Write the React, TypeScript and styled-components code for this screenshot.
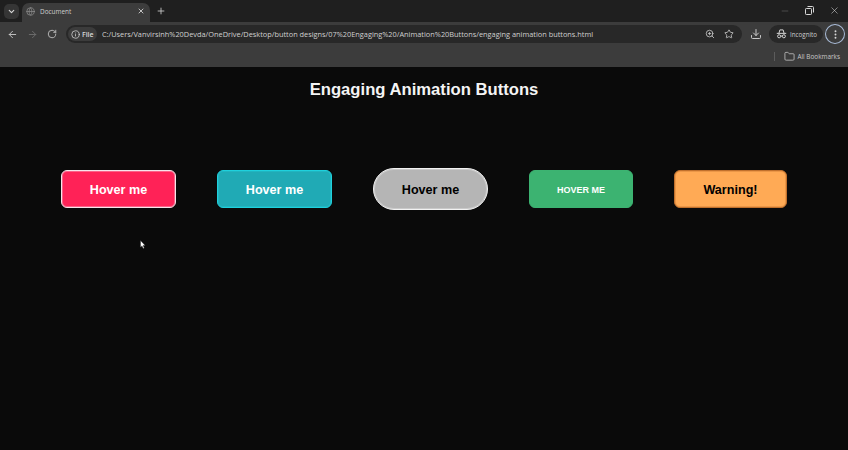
import type { FC, ReactNode } from 'react'
import styled, { createGlobalStyle } from 'styled-components'
import { ArrowLeft, ArrowRight, ChevronDown, Download, Globe, Info, Minus, Plus, RotateCw, Star, X, ZoomIn, Folder, MoreVertical } from 'lucide-react'

const Global = createGlobalStyle`
	html, body {
		margin: 0;
		padding: 0;
		height: 100%;
		background: #0a0a0a;
		overflow: hidden;
	}
	#root {
		height: 100%;
	}
`

const Spy: FC = () => (
	<svg width="11" height="10" viewBox="0 0 12 11" fill="none" stroke="#d4d4d4" strokeWidth="1.1">
		<path d="M3.2 4.6 L4.2 1 H7.8 L8.8 4.6" />
		<path d="M0.8 4.8 H11.2" />
		<circle cx="3.4" cy="8" r="1.7" />
		<circle cx="8.6" cy="8" r="1.7" />
		<path d="M5.1 7.8 H6.9" />
	</svg>
)

const Restore: FC = () => (
	<svg width="9" height="9" viewBox="0 0 9 9" fill="none" stroke="#d8d8d8" strokeWidth="1">
		<rect x="0.5" y="2.5" width="6" height="6" rx="0.8" />
		<path d="M2.5 0.5 H7.5 Q8.5 0.5 8.5 1.5 V6.5" />
	</svg>
)

const Cursor: FC = () => (
	<svg width="6" height="9" viewBox="0 0 6 9">
		<path d="M0.5 0.5 V7.2 L2 5.9 L3.2 8.4 L4.3 7.9 L3.1 5.5 H5.2 Z" fill="#fff" stroke="#222" strokeWidth="0.4" />
	</svg>
)

const ToolIcon: FC<{ children: ReactNode; dim?: boolean }> = ({ children, dim }) => <IconSlot $dim={dim}>{children}</IconSlot>

const App: FC = () => {
	return (
		<Window>
			<Global />
			<TabStrip>
				<TabSearch>
					<ChevronDown size={9} strokeWidth={3} />
				</TabSearch>
				<Tab>
					<Globe size={9} color="#8c8c8c" strokeWidth={2} />
					<TabTitle>Document</TabTitle>
					<X size={8} color="#dcdcdc" strokeWidth={2.5} />
				</Tab>
				<NewTab>
					<Plus size={10} strokeWidth={2} />
				</NewTab>
				<WindowControls>
					<Minus size={10} color="#777" strokeWidth={1.2} />
					<Restore />
					<X size={11} color="#d8d8d8" strokeWidth={1.2} />
				</WindowControls>
			</TabStrip>
			<Toolbar>
				<NavGroup>
					<ToolIcon>
						<ArrowLeft size={11} />
					</ToolIcon>
					<ToolIcon dim>
						<ArrowRight size={11} />
					</ToolIcon>
					<ToolIcon>
						<RotateCw size={10} />
					</ToolIcon>
				</NavGroup>
				<Omnibox>
					<FileChip>
						<Info size={9} strokeWidth={2} />
						File
					</FileChip>
					<Url>C:/Users/Vanvirsinh%20Devda/OneDrive/Desktop/button designs/07%20Engaging%20/Animation%20Buttons/engaging animation buttons.html</Url>
					<OmniActions>
						<ZoomIn size={10} />
						<Star size={10} strokeWidth={2} />
					</OmniActions>
				</Omnibox>
				<DownloadSlot>
					<Download size={12} />
				</DownloadSlot>
				<IncognitoPill>
					<Spy />
					Incognito
				</IncognitoPill>
				<MenuRing>
					<MoreVertical size={11} strokeWidth={2.2} />
				</MenuRing>
			</Toolbar>
			<BookmarksBar>
				<Separator />
				<Folder size={11} color="#d0d0d0" strokeWidth={1.6} />
				<BookmarksLabel>All Bookmarks</BookmarksLabel>
			</BookmarksBar>
			<Page>
				<Title>Engaging Animation Buttons</Title>
				<ButtonRow>
					<DemoButton $w={115} $bg="#ff2257" $border="#f6e4ea" $color="#fff" $radius={6}>
						Hover me
					</DemoButton>
					<DemoButton $w={115} $bg="#20aab5" $border="#1fd0dc" $color="#fff" $radius={6}>
						Hover me
					</DemoButton>
					<DemoButton $w={115} $h={42} $bg="#b5b5b5" $border="#f2f2f2" $color="#000" $radius={21}>
						Hover me
					</DemoButton>
					<DemoButton $w={104} $bg="#3cb371" $border="#3cb371" $color="#fff" $radius={6} $size={9}>
						HOVER ME
					</DemoButton>
					<DemoButton $w={113} $bg="#ffaa55" $border="#c0702c" $color="#000" $radius={6}>
						Warning!
					</DemoButton>
				</ButtonRow>
				<Pointer>
					<Cursor />
				</Pointer>
			</Page>
		</Window>
	)
}

const Window = styled.div`
	width: 848px;
	height: 450px;
	display: flex;
	flex-direction: column;
	font-family: 'Liberation Sans', Arial, sans-serif;
	background: #0a0a0a;
	overflow: hidden;
`

const TabStrip = styled.div`
	height: 22px;
	flex: none;
	background: #1f1f1f;
	display: flex;
	align-items: flex-end;
	padding-left: 4px;
	color: #d8d8d8;
`

const TabSearch = styled.div`
	width: 15px;
	height: 15px;
	margin-bottom: 3px;
	border-radius: 5px;
	background: #353535;
	display: flex;
	align-items: center;
	justify-content: center;
`

const Tab = styled.div`
	width: 128px;
	height: 19px;
	margin-left: 3px;
	box-sizing: border-box;
	padding: 0 5px 3px 4px;
	background: #3c3c3c;
	border-radius: 7px 7px 0 0;
	display: flex;
	align-items: center;
	gap: 5px;
`

const TabTitle = styled.span`
	flex: 1;
	font-size: 6.4px;
	color: #cfcfcf;
	font-family: 'Open Sans', sans-serif;
`

const NewTab = styled.div`
	margin: 0 0 6px 6px;
	display: flex;
	color: #d0d0d0;
`

const WindowControls = styled.div`
	margin: 0 8px 6px auto;
	display: flex;
	align-items: center;
	gap: 15px;
`

const Toolbar = styled.div`
	height: 23px;
	flex: none;
	box-sizing: border-box;
	background: #3c3c3c;
	display: flex;
	align-items: center;
	padding: 1px 3px 0 6px;
	color: #c8c8c8;
`

const NavGroup = styled.div`
	display: flex;
	align-items: center;
	gap: 8px;
	width: 60px;
`

const IconSlot = styled.span<{ $dim?: boolean }>`
	width: 12px;
	display: flex;
	justify-content: center;
	color: ${p => (p.$dim ? '#6f6f6f' : '#c8c8c8')};
`

const Omnibox = styled.div`
	width: 677px;
	height: 18px;
	box-sizing: border-box;
	border-radius: 9px;
	background: #282828;
	display: flex;
	align-items: center;
	padding: 0 8px 0 2px;
`

const FileChip = styled.div`
	width: 29px;
	height: 14px;
	box-sizing: border-box;
	padding-left: 3px;
	border-radius: 7px;
	background: #3c3c3c;
	display: flex;
	align-items: center;
	gap: 2px;
	color: #d8d8d8;
	font-family: 'Open Sans', sans-serif;
	font-size: 7px;
	font-weight: 600;
`

const Url = styled.div`
	margin-left: 5px;
	flex: 1;
	font-family: 'Open Sans', sans-serif;
	font-size: 7.37px;
	color: #d0d0d0;
	white-space: nowrap;
	overflow: hidden;
`

const OmniActions = styled.div`
	display: flex;
	align-items: center;
	gap: 9px;
	color: #c8c8c8;
`

const DownloadSlot = styled.div`
	width: 26px;
	margin-left: 1px;
	display: flex;
	justify-content: center;
	color: #c8c8c8;
`

const IncognitoPill = styled.div`
	width: 54px;
	height: 18px;
	box-sizing: border-box;
	padding-left: 7px;
	border-radius: 9px;
	background: #282828;
	display: flex;
	align-items: center;
	gap: 3px;
	font-family: 'Open Sans', sans-serif;
	font-size: 6.2px;
	color: #cfcfcf;
`

const MenuRing = styled.div`
	width: 20px;
	height: 20px;
	margin-left: 2px;
	box-sizing: border-box;
	border: 1.2px solid #a9bcd8;
	border-radius: 50%;
	display: flex;
	align-items: center;
	justify-content: center;
	color: #d8d8d8;
`

const BookmarksBar = styled.div`
	height: 22px;
	flex: none;
	background: #3c3c3c;
	display: flex;
	align-items: center;
	justify-content: flex-end;
	padding-right: 8px;
	box-sizing: border-box;
`

const Separator = styled.div`
	width: 1px;
	height: 9px;
	margin-right: 9px;
	background: #5c5c5c;
`

const BookmarksLabel = styled.span`
	margin-left: 2px;
	font-family: 'Open Sans', sans-serif;
	font-size: 6.4px;
	color: #c8c8c8;
`

const Page = styled.main`
	flex: 1;
	position: relative;
	background: #0a0a0a;
	display: flex;
	flex-direction: column;
`

const Title = styled.h1`
	margin: 12px 0 0;
	text-align: center;
	font-size: 16.65px;
	line-height: 22px;
	font-weight: 700;
	color: #f4f4f4;
`

const ButtonRow = styled.div`
	margin-top: 67px;
	padding-left: 61px;
	height: 42px;
	display: flex;
	align-items: center;
	gap: 41px;
`

const DemoButton = styled.button<{
	$w: number
	$h?: number
	$bg: string
	$border: string
	$color: string
	$radius: number
	$size?: number
}>`
	width: ${p => p.$w}px;
	height: ${p => p.$h ?? 38}px;
	padding: 1px 0 0;
	box-sizing: border-box;
	border: 1px solid ${p => p.$border};
	box-shadow: inset 0 0 0 1px ${p => p.$border}55;
	border-radius: ${p => p.$radius}px;
	background: ${p => p.$bg};
	color: ${p => p.$color};
	font-family: 'Liberation Sans', Arial, sans-serif;
	font-size: ${p => p.$size ?? 12.6}px;
	font-weight: 700;
`

const Pointer = styled.div`
	position: absolute;
	left: 140px;
	top: 173px;
	display: flex;
`

export default App
